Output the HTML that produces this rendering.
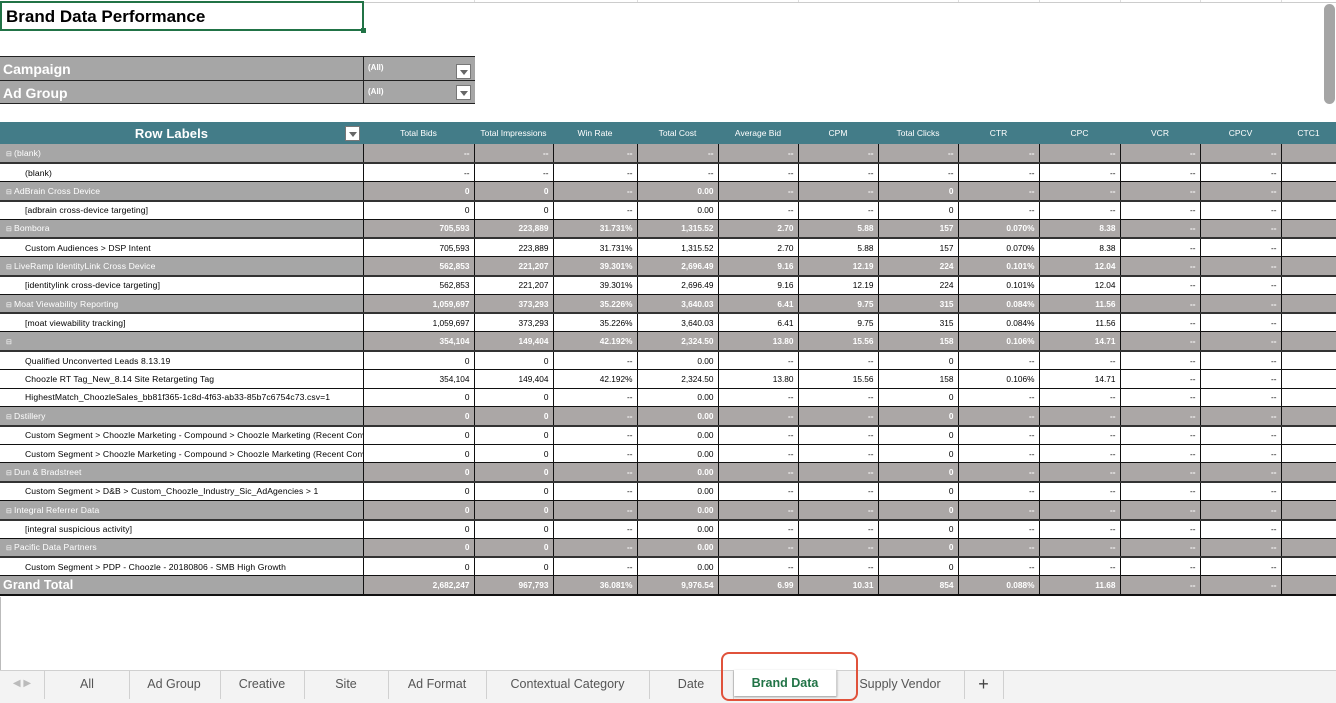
<!DOCTYPE html>
<html><head><meta charset="utf-8"><style>
body{margin:0;width:1336px;height:702px;overflow:hidden;background:#fff;font-family:"Liberation Sans",sans-serif;position:relative}
.gl{position:absolute;top:0;height:2px;border-left:1px solid #ddd}
#title{position:absolute;left:0;top:1px;width:364px;height:30px;border:2px solid #217346;box-sizing:border-box;font-weight:bold;font-size:17px;line-height:28px;padding-left:4px}
#title:after{content:"";position:absolute;right:-4px;bottom:-4px;width:5px;height:5px;background:#217346}
.flt{position:absolute;left:0;width:475px;height:24px;background:#a6a6a6;border-top:1px solid #222;box-sizing:border-box}
.flt b{position:absolute;left:3px;top:4px;color:#fff;font-size:14px}
.flt i{position:absolute;left:363px;top:0;bottom:0;border-left:1px solid #222;font-style:normal;color:#fff;font-size:8px;font-weight:bold;padding:6px 0 0 4px;width:108px}
.dd{position:absolute;width:15px;height:15px;background:#fff;border:1px solid #777;box-sizing:border-box}
.dd:after{content:"";position:absolute;left:3px;top:5px;border-left:4px solid transparent;border-right:4px solid transparent;border-top:5px solid #666}
table{position:absolute;left:0;top:122px;border-collapse:collapse;table-layout:fixed;width:1336px;font-size:8.3px}
td{border-left:1px solid #111;border-bottom:1px solid #111;height:18.6px;padding:0 4px 0 0;text-align:right;white-space:nowrap;overflow:hidden;box-sizing:border-box}
td:first-child{border-left:none;text-align:left;padding-left:25px;font-size:8.6px;letter-spacing:0.1px}
tr.h td{background:#437c88;color:#fff;text-align:center;height:22px;border:none;font-size:8.5px;padding:0}
tr.h td:first-child{font-size:13px;font-weight:bold;text-align:center;padding:0 20px 0 0;position:relative}
tr.g td{background:#aba7a6;color:#fff;font-weight:bold;border-bottom:2px solid #333;height:19px}
tr.g td:first-child{background:#a6a6a6;font-weight:normal;padding-left:6px}
tr.g td:first-child:before{content:"⊟ ";font-size:7px}
tr.t td{background:#aba7a6;color:#fff;font-weight:bold;border-bottom:2px solid #111;height:19.5px}
tr.t td:first-child{background:#a6a6a6;font-size:12.5px;padding-left:3px}
#tabs{position:absolute;left:0;top:670px;width:1336px;height:32px;background:#f3f3f3;border-top:1px solid #d0d0d0;font-size:12.5px;color:#555}
#tabs span{position:absolute;top:0;height:28px;line-height:26px;text-align:center;border-right:1px solid #d0d0d0}
</style></head><body>
<div class="gl" style="left:474px"></div><div class="gl" style="left:637px"></div><div class="gl" style="left:798px"></div><div class="gl" style="left:958px"></div><div class="gl" style="left:1039px"></div><div class="gl" style="left:1120px"></div><div class="gl" style="left:1200px"></div><div class="gl" style="left:1281px"></div>
<div style="position:absolute;left:0;top:2px;width:1336px;border-top:1px solid #ccc"></div>
<div id="title">Brand Data Performance</div>
<div style="position:absolute;left:1324px;top:4px;width:11px;height:100px;border-radius:6px;background:#a5a5a5"></div>
<div class="flt" style="top:56px"><b>Campaign</b><i>(All)</i><div class="dd" style="left:456px;top:7px"></div></div>
<div class="flt" style="top:80px;border-bottom:1px solid #222;height:24px"><b>Ad Group</b><i>(All)</i><div class="dd" style="left:456px;top:4px"></div></div>
<table>
<colgroup><col style="width:363px"><col style="width:111px"><col style="width:79px"><col style="width:84px"><col style="width:81px"><col style="width:80px"><col style="width:80px"><col style="width:80px"><col style="width:81px"><col style="width:81px"><col style="width:80px"><col style="width:81px"><col style="width:55px"></colgroup>
<tr class="h"><td>Row Labels<div class="dd" style="left:345px;top:4px"></div></td><td>Total Bids</td><td>Total Impressions</td><td>Win Rate</td><td>Total Cost</td><td>Average Bid</td><td>CPM</td><td>Total Clicks</td><td>CTR</td><td>CPC</td><td>VCR</td><td>CPCV</td><td>CTC1</td></tr>
<tr class="g"><td>(blank)</td><td>--</td><td>--</td><td>--</td><td>--</td><td>--</td><td>--</td><td>--</td><td>--</td><td>--</td><td>--</td><td>--</td><td></td></tr>
<tr><td>(blank)</td><td>--</td><td>--</td><td>--</td><td>--</td><td>--</td><td>--</td><td>--</td><td>--</td><td>--</td><td>--</td><td>--</td><td></td></tr>
<tr class="g"><td>AdBrain Cross Device</td><td>0</td><td>0</td><td>--</td><td>0.00</td><td>--</td><td>--</td><td>0</td><td>--</td><td>--</td><td>--</td><td>--</td><td></td></tr>
<tr><td>[adbrain cross-device targeting]</td><td>0</td><td>0</td><td>--</td><td>0.00</td><td>--</td><td>--</td><td>0</td><td>--</td><td>--</td><td>--</td><td>--</td><td></td></tr>
<tr class="g"><td>Bombora</td><td>705,593</td><td>223,889</td><td>31.731%</td><td>1,315.52</td><td>2.70</td><td>5.88</td><td>157</td><td>0.070%</td><td>8.38</td><td>--</td><td>--</td><td></td></tr>
<tr><td>Custom Audiences &gt; DSP Intent</td><td>705,593</td><td>223,889</td><td>31.731%</td><td>1,315.52</td><td>2.70</td><td>5.88</td><td>157</td><td>0.070%</td><td>8.38</td><td>--</td><td>--</td><td></td></tr>
<tr class="g"><td>LiveRamp IdentityLink Cross Device</td><td>562,853</td><td>221,207</td><td>39.301%</td><td>2,696.49</td><td>9.16</td><td>12.19</td><td>224</td><td>0.101%</td><td>12.04</td><td>--</td><td>--</td><td></td></tr>
<tr><td>[identitylink cross-device targeting]</td><td>562,853</td><td>221,207</td><td>39.301%</td><td>2,696.49</td><td>9.16</td><td>12.19</td><td>224</td><td>0.101%</td><td>12.04</td><td>--</td><td>--</td><td></td></tr>
<tr class="g"><td>Moat Viewability Reporting</td><td>1,059,697</td><td>373,293</td><td>35.226%</td><td>3,640.03</td><td>6.41</td><td>9.75</td><td>315</td><td>0.084%</td><td>11.56</td><td>--</td><td>--</td><td></td></tr>
<tr><td>[moat viewability tracking]</td><td>1,059,697</td><td>373,293</td><td>35.226%</td><td>3,640.03</td><td>6.41</td><td>9.75</td><td>315</td><td>0.084%</td><td>11.56</td><td>--</td><td>--</td><td></td></tr>
<tr class="g"><td></td><td>354,104</td><td>149,404</td><td>42.192%</td><td>2,324.50</td><td>13.80</td><td>15.56</td><td>158</td><td>0.106%</td><td>14.71</td><td>--</td><td>--</td><td></td></tr>
<tr><td>Qualified Unconverted Leads 8.13.19</td><td>0</td><td>0</td><td>--</td><td>0.00</td><td>--</td><td>--</td><td>0</td><td>--</td><td>--</td><td>--</td><td>--</td><td></td></tr>
<tr><td>Choozle RT Tag_New_8.14 Site Retargeting Tag</td><td>354,104</td><td>149,404</td><td>42.192%</td><td>2,324.50</td><td>13.80</td><td>15.56</td><td>158</td><td>0.106%</td><td>14.71</td><td>--</td><td>--</td><td></td></tr>
<tr><td>HighestMatch_ChoozleSales_bb81f365-1c8d-4f63-ab33-85b7c6754c73.csv=1</td><td>0</td><td>0</td><td>--</td><td>0.00</td><td>--</td><td>--</td><td>0</td><td>--</td><td>--</td><td>--</td><td>--</td><td></td></tr>
<tr class="g"><td>Dstillery</td><td>0</td><td>0</td><td>--</td><td>0.00</td><td>--</td><td>--</td><td>0</td><td>--</td><td>--</td><td>--</td><td>--</td><td></td></tr>
<tr><td>Custom Segment &gt; Choozle Marketing - Compound &gt; Choozle Marketing (Recent Conversions)</td><td>0</td><td>0</td><td>--</td><td>0.00</td><td>--</td><td>--</td><td>0</td><td>--</td><td>--</td><td>--</td><td>--</td><td></td></tr>
<tr><td>Custom Segment &gt; Choozle Marketing - Compound &gt; Choozle Marketing (Recent Conversions)</td><td>0</td><td>0</td><td>--</td><td>0.00</td><td>--</td><td>--</td><td>0</td><td>--</td><td>--</td><td>--</td><td>--</td><td></td></tr>
<tr class="g"><td>Dun &amp; Bradstreet</td><td>0</td><td>0</td><td>--</td><td>0.00</td><td>--</td><td>--</td><td>0</td><td>--</td><td>--</td><td>--</td><td>--</td><td></td></tr>
<tr><td>Custom Segment &gt; D&amp;B &gt; Custom_Choozle_Industry_Sic_AdAgencies &gt; 1</td><td>0</td><td>0</td><td>--</td><td>0.00</td><td>--</td><td>--</td><td>0</td><td>--</td><td>--</td><td>--</td><td>--</td><td></td></tr>
<tr class="g"><td>Integral Referrer Data</td><td>0</td><td>0</td><td>--</td><td>0.00</td><td>--</td><td>--</td><td>0</td><td>--</td><td>--</td><td>--</td><td>--</td><td></td></tr>
<tr><td>[integral suspicious activity]</td><td>0</td><td>0</td><td>--</td><td>0.00</td><td>--</td><td>--</td><td>0</td><td>--</td><td>--</td><td>--</td><td>--</td><td></td></tr>
<tr class="g"><td>Pacific Data Partners</td><td>0</td><td>0</td><td>--</td><td>0.00</td><td>--</td><td>--</td><td>0</td><td>--</td><td>--</td><td>--</td><td>--</td><td></td></tr>
<tr><td>Custom Segment &gt; PDP - Choozle - 20180806 - SMB High Growth</td><td>0</td><td>0</td><td>--</td><td>0.00</td><td>--</td><td>--</td><td>0</td><td>--</td><td>--</td><td>--</td><td>--</td><td></td></tr>
<tr class="t"><td>Grand Total</td><td>2,682,247</td><td>967,793</td><td>36.081%</td><td>9,976.54</td><td>6.99</td><td>10.31</td><td>854</td><td>0.088%</td><td>11.68</td><td>--</td><td>--</td><td></td></tr>
</table>
<div style="position:absolute;left:0;top:597px;height:73px;border-left:1px solid #bbb"></div>
<div id="tabs">
<span style="left:0;width:44px;border:none;color:#bbb;font-size:10px">◀ ▶</span>
<span style="left:44px;width:84px;border-left:1px solid #d0d0d0">All</span>
<span style="left:128px;width:92px">Ad Group</span>
<span style="left:220px;width:84px">Creative</span>
<span style="left:304px;width:84px">Site</span>
<span style="left:388px;width:98px">Ad Format</span>
<span style="left:486px;width:163px">Contextual Category</span>
<span style="left:649px;width:84px">Date</span>
<span style="left:734px;width:102px;background:#fff;color:#217346;font-weight:bold;top:-1px;height:26px;box-shadow:0 1px 2px #999">Brand Data</span>
<span style="left:836px;width:128px">Supply Vendor</span>
<span style="left:964px;width:39px;font-size:18px;color:#444">+</span>
</div>
<div style="position:absolute;left:721px;top:652px;width:137px;height:49px;border:2px solid #e0523b;border-radius:8px;box-sizing:border-box"></div>
</body></html>
